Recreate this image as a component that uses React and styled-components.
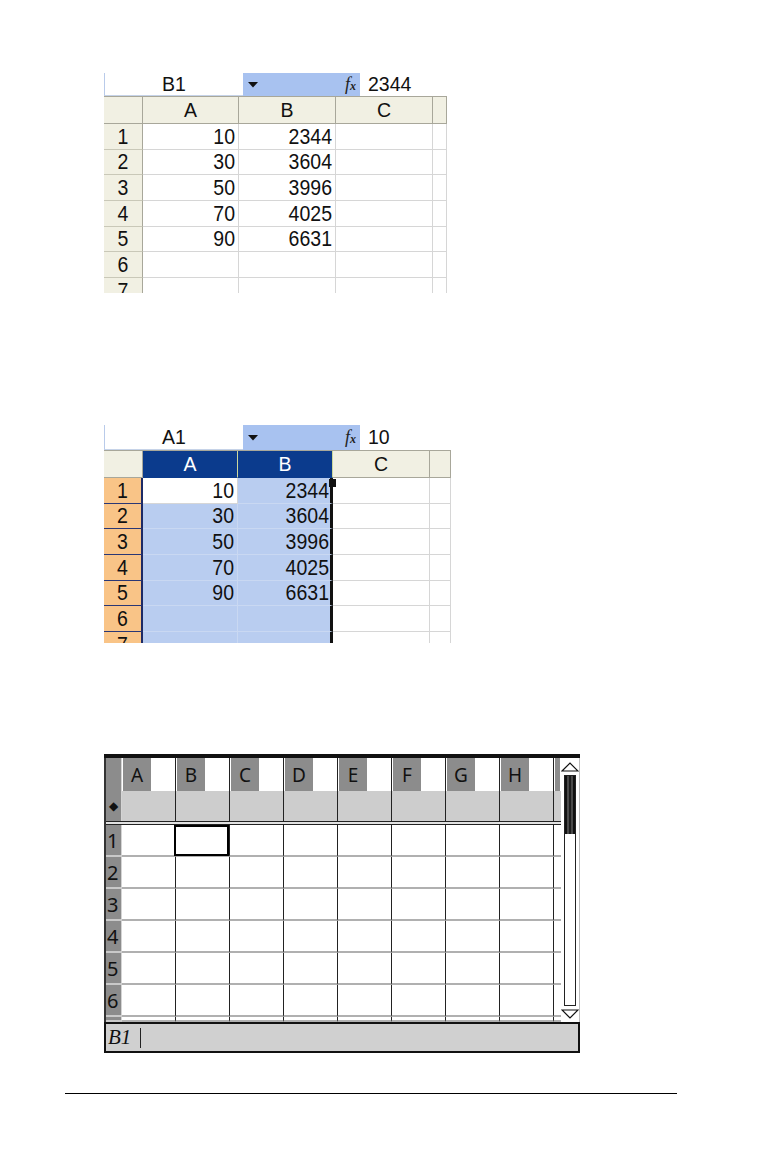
import React from "react";
import styled, { createGlobalStyle } from "styled-components";

const GlobalStyle = createGlobalStyle`
  html, body { margin: 0; padding: 0; background: #fff; }
  body { font-family: "Liberation Sans", Arial, sans-serif; }
`;

const rows = [[10, 2344], [30, 3604], [50, 3996], [70, 4025], [90, 6631], [], []];
const tiCols = ["A", "B", "C", "D", "E", "F", "G", "H"];

const Page = styled.div`
  width: 764px;
  height: 1160px;
  overflow: hidden;
  background: #fff;
  display: flex;
  flex-direction: column;
  align-items: flex-start;
`;

const Figure = styled.div`
  flex-shrink: 0;
  margin-top: ${(p) => p.$top}px;
  margin-left: 104px;
  width: ${(p) => p.$w}px;
  height: ${(p) => p.$h}px;
  overflow: hidden;
  font-family: "Liberation Sans", Arial, sans-serif;
  font-size: 19.5px;
  color: #111;
`;

/* ---------- excel ---------- */
const NameRow = styled.div`
  display: flex;
  height: ${(p) => p.$h}px;
`;

const NameBox = styled.div`
  width: 139px;
  box-sizing: border-box;
  border-left: 1px solid #b9cbea;
  border-bottom: 1px solid #c6d3e8;
  display: flex;
  align-items: center;
  justify-content: center;
`;

const DropArea = styled.div`
  width: 117px;
  box-sizing: border-box;
  background: #a8c2f0;
  display: flex;
  align-items: center;
  justify-content: space-between;
  padding: 0 4px 0 5px;
`;

const Fx = styled.span`
  font-family: "Liberation Serif", "Times New Roman", serif;
  font-style: italic;
  font-size: 18px;
  color: #222;
  small {
    font-size: 12px;
    font-weight: bold;
  }
`;

const FormulaValue = styled.div`
  padding-left: 8px;
  display: flex;
  align-items: center;
`;

const XlGrid = styled.div`
  display: grid;
  grid-template-columns: ${(p) => p.$cols};
  grid-template-rows: 27px;
  grid-auto-rows: 25.65px;
  border-top: 1px solid #a8a79a;
`;

const XlHead = styled.div`
  background: ${(p) => (p.$hl ? "#0b3b8d" : "#f1f0e3")};
  color: ${(p) => (p.$hl ? "#fff" : "#111")};
  border-right: 1px solid ${(p) => (p.$hl ? "#cbd79c" : "#a8a79a")};
  border-bottom: 1px solid ${(p) => (p.$hl ? "#0b3b8d" : "#a8a79a")};
  display: flex;
  align-items: center;
  justify-content: center;
  overflow: hidden;
`;

const XlRowHead = styled.div`
  background: ${(p) => (p.$hl ? "#f9c487" : "#f1f0e3")};
  border-right: ${(p) => (p.$hl ? "2px solid #1c2a66" : "1px solid #a8a79a")};
  border-bottom: 1px solid ${(p) => (p.$hl ? "#2a3775" : "#c9c8b8")};
  display: flex;
  align-items: center;
  justify-content: center;
`;

const XlCell = styled.div`
  position: relative;
  background: ${(p) => (p.$sel ? "#b9cdf0" : "#fff")};
  border-right: ${(p) => (p.$edge ? "3px solid #111" : p.$sel ? "1px solid #c9d8f2" : "1px solid #d6d6d6")};
  border-bottom: 1px solid ${(p) => (p.$sel ? "#c9d8f2" : "#d6d6d6")};
  display: flex;
  align-items: center;
  justify-content: flex-end;
  padding-right: ${(p) => (p.$edge ? 1 : 3)}px;
`;

const Num = styled.span`
  display: inline-block;
  transform: scaleY(1.15);
`;

const FillHandle = styled.span`
  position: absolute;
  z-index: 2;
  top: 1px;
  right: -6px;
  width: 7px;
  height: 8px;
  background: #111;
`;

function ExcelSheet({ top, width, height, nameH, cols, nameRef, value, selection }) {
  const heads = ["A", "B", "C", ""];
  return (
    <Figure $top={top} $w={width} $h={height}>
      <NameRow $h={nameH}>
        <NameBox>{nameRef}</NameBox>
        <DropArea>
          <svg width="10" height="6" viewBox="0 0 10 6">
            <polygon points="0,0 10,0 5,5.5" fill="#111" />
          </svg>
          <Fx>
            f<small>x</small>
          </Fx>
        </DropArea>
        <FormulaValue>{value}</FormulaValue>
      </NameRow>
      <XlGrid $cols={cols}>
        <XlHead />
        {heads.map((h, i) => (
          <XlHead key={i} $hl={selection && i < 2}>
            {h}
          </XlHead>
        ))}
        {rows.map((r, ri) => (
          <React.Fragment key={ri}>
            <XlRowHead $hl={selection}>
              <Num>{ri + 1}</Num>
            </XlRowHead>
            <XlCell $sel={selection && ri > 0}>
              <Num>{r[0]}</Num>
            </XlCell>
            <XlCell $sel={selection} $edge={selection}>
              <Num>{r[1]}</Num>
              {selection && ri === 0 && <FillHandle />}
            </XlCell>
            <XlCell />
            <XlCell />
          </React.Fragment>
        ))}
      </XlGrid>
    </Figure>
  );
}

/* ---------- ti-nspire ---------- */
const TiFrame = styled.div`
  flex-shrink: 0;
  margin-top: 111px;
  margin-left: 104px;
  width: 476px;
  height: 299px;
  box-sizing: border-box;
  border-top: 4px solid #111;
  display: flex;
  flex-direction: column;
  font-family: "Noto Sans", "Open Sans", sans-serif;
  color: #111;
`;

const TiBody = styled.div`
  display: flex;
  height: 264px;
`;

const TiSheet = styled.div`
  width: 457px;
  box-sizing: border-box;
  border-left: 2px solid #333;
  display: grid;
  grid-template-columns: 16px repeat(8, 54px) 7px;
  grid-template-rows: 33px 30px 4px repeat(6, 32px) 5px;
  overflow: hidden;
`;

const TiSide = styled.div`
  background: #8c8c8c;
  border-right: 1px solid #d4d4d4;
  border-bottom: ${(p) => (p.$row ? "2px solid #c9c9c9" : "none")};
  display: flex;
  align-items: center;
  justify-content: ${(p) => (p.$center ? "center" : "flex-start")};
  padding-left: ${(p) => (p.$center ? 0 : 1)}px;
  font-size: 20px;
  overflow: hidden;
`;

const Diamond = styled.span`
  font-family: "DejaVu Sans", sans-serif;
  font-size: 12px;
`;

const TiHead = styled.div`
  display: flex;
  background: #fff;
  border-right: ${(p) => (p.$last ? "none" : "1px solid #222")};
  padding-left: 1px;
`;

const Tab = styled.div`
  width: ${(p) => p.$w}px;
  background: #8c8c8c;
  display: flex;
  align-items: center;
  justify-content: center;
  font-size: 19px;
`;

const TiFormula = styled.div`
  background: #cdcdcd;
  border-right: ${(p) => (p.$last ? "none" : "1px solid #222")};
`;

const TiDivider = styled.div`
  grid-column: 1 / -1;
  box-sizing: border-box;
  border-top: 1px solid #222;
  border-bottom: 1px solid #222;
  background: #e2e2e2;
`;

const TiCell = styled.div`
  position: relative;
  background: #fff;
  border-right: ${(p) => (p.$last ? "none" : "1px solid #222")};
  border-bottom: 2px solid #b0b0b0;
  &::after {
    content: "";
    display: ${(p) => (p.$active ? "block" : "none")};
    position: absolute;
    left: -2px;
    top: 0;
    right: 0;
    bottom: -1px;
    border: 2px solid #000;
  }
`;

const TiScroll = styled.div`
  width: 19px;
  box-sizing: border-box;
  border-right: 1px solid #bdbdbd;
  display: flex;
  flex-direction: column;
  align-items: center;
`;

const Arrow = styled.svg`
  display: block;
  margin: ${(p) => p.$m};
`;

const Track = styled.div`
  flex: 1;
  width: 12px;
  margin: 3px 0;
  box-sizing: border-box;
  border: 1px solid #222;
  background: #fff;
`;

const Thumb = styled.div`
  height: 58px;
  background: linear-gradient(
    to right,
    #111 0 2px,
    #4a4a4a 2px 4px,
    #1c1c1c 4px 6px,
    #4a4a4a 6px 8px,
    #111 8px
  );
`;

const EntryBar = styled.div`
  height: 31px;
  box-sizing: border-box;
  border: 2px solid #111;
  background: #d0d0d0;
  display: flex;
  align-items: center;
  padding-left: 2px;
  font-family: "Liberation Serif", "Times New Roman", serif;
  font-style: italic;
  font-size: 21px;
`;

const Cursor = styled.span`
  display: inline-block;
  width: 1px;
  height: 20px;
  margin-left: 9px;
  background: #222;
`;

const Rule = styled.div`
  flex-shrink: 0;
  margin-top: 40px;
  margin-left: 65px;
  width: 612px;
  height: 1px;
  background: #000;
`;

function NspireSheet() {
  const bodyRows = [1, 2, 3, 4, 5, 6, ""];
  return (
    <TiFrame>
      <TiBody>
        <TiSheet>
          <TiSide />
          {tiCols.map((c) => (
            <TiHead key={c}>
              <Tab $w={28}>{c}</Tab>
            </TiHead>
          ))}
          <TiHead $last>
            <Tab $w={5} />
          </TiHead>

          <TiSide $center>
            <Diamond>◆</Diamond>
          </TiSide>
          {tiCols.map((c) => (
            <TiFormula key={c} />
          ))}
          <TiFormula $last />

          <TiDivider />

          {bodyRows.map((n, ri) => (
            <React.Fragment key={ri}>
              <TiSide $row>{n}</TiSide>
              {tiCols.map((c, ci) => (
                <TiCell key={c} $active={ri === 0 && ci === 1} />
              ))}
              <TiCell $last />
            </React.Fragment>
          ))}
        </TiSheet>
        <TiScroll>
          <Arrow width="18" height="10" viewBox="0 0 18 10" $m="4px 0 0">
            <polygon points="1,9 9,1 17,9" fill="#fff" stroke="#111" strokeWidth="1.2" />
          </Arrow>
          <Track>
            <Thumb />
          </Track>
          <Arrow width="18" height="10" viewBox="0 0 18 10" $m="0 0 3px">
            <polygon points="1,1 17,1 9,9" fill="#fff" stroke="#111" strokeWidth="1.2" />
          </Arrow>
        </TiScroll>
      </TiBody>
      <EntryBar>
        B1<Cursor />
      </EntryBar>
    </TiFrame>
  );
}

export default function App() {
  return (
    <Page>
      <GlobalStyle />
      <ExcelSheet
        top={73}
        width={343}
        height={220}
        nameH={23}
        cols="39px 96px 97px 97px 14px"
        nameRef="B1"
        value="2344"
      />
      <ExcelSheet
        top={132}
        width={347}
        height={218}
        nameH={25}
        cols="39px 95px 95px 97px 21px"
        nameRef="A1"
        value="10"
        selection
      />
      <NspireSheet />
      <Rule />
    </Page>
  );
}
